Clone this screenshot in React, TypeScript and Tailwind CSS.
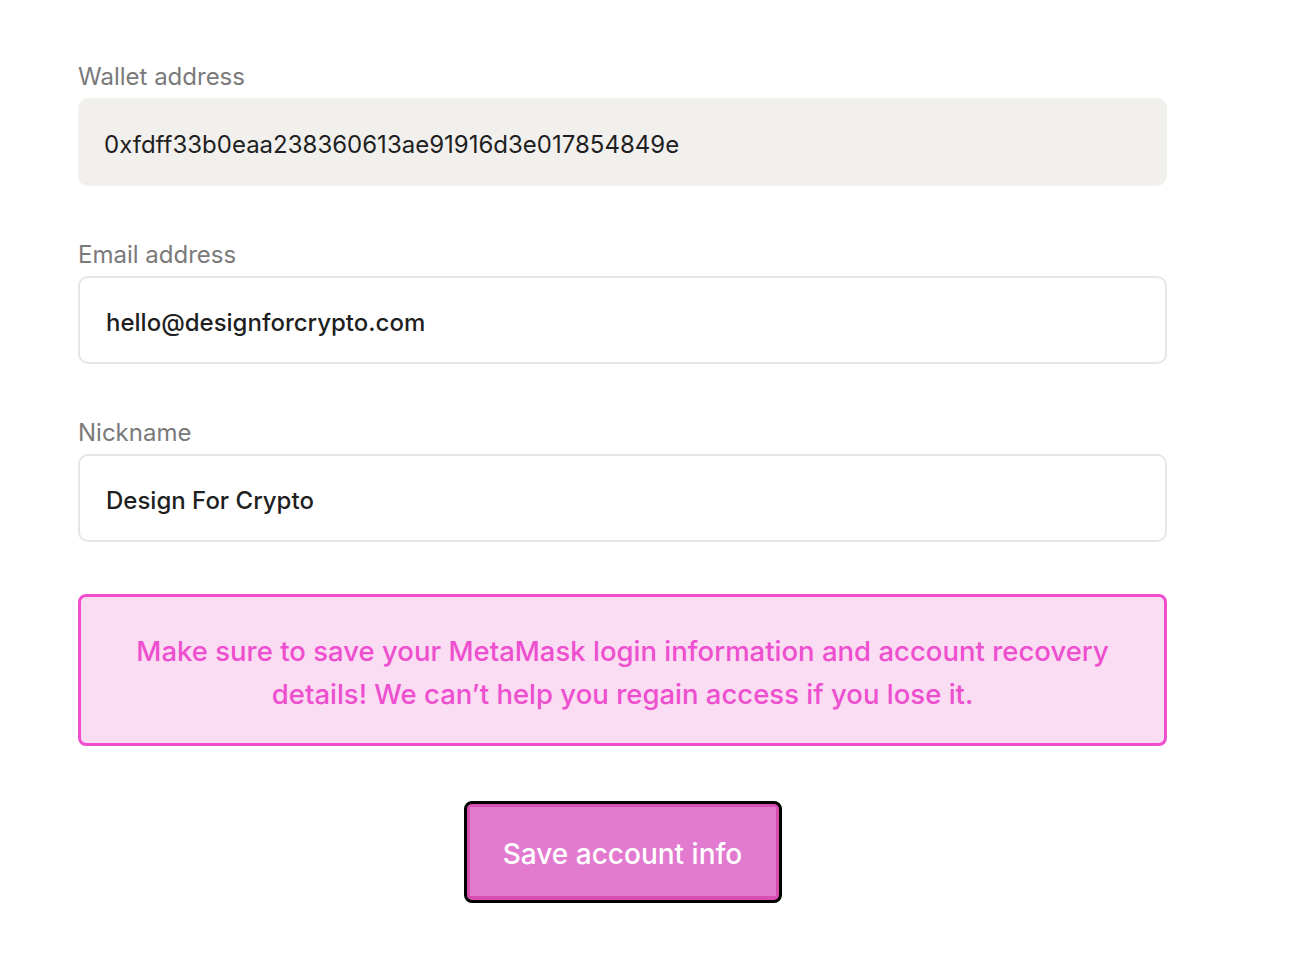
import React from "react";

const font = { fontFamily: "Inter, 'Noto Sans', sans-serif" };

function Field({ label, value, filled, bold }: { label: string; value: string; filled?: boolean; bold?: boolean }) {
  return (
    <div className="flex flex-col">
      <div className="text-[24px] leading-[30px] text-[#7a7a7a] mb-[6px]">{label}</div>
      <div
        className={
          "h-[88px] rounded-[10px] flex items-center px-[26px] pt-[5px] text-[24px] text-[#1f1f1f] " +
          (filled ? "bg-[#f1f0ed]" : "bg-white border-2 border-[#e6e6e6]") +
          (bold ? " font-medium" : "")
        }
      >
        {value}
      </div>
    </div>
  );
}

export default function App() {
  return (
    <div className="min-h-[960px] bg-white" style={font}>
      <div className="w-[1089px] ml-[78px] pt-[62px] flex flex-col gap-[54px]">
        <Field label="Wallet address" value="0xfdff33b0eaa238360613ae91916d3e017854849e" filled />
        <Field label="Email address" value="hello@designforcrypto.com" bold />
        <Field label="Nickname" value="Design For Crypto" bold />
      </div>
      <div className="w-[1089px] ml-[78px] mt-[52px] h-[152px] rounded-[8px] border-[3px] border-[#ef4fcf] bg-[#fadcf3] flex items-center justify-center px-[30px] pt-[6px]">
        <p className="text-center text-[27.5px] leading-[43px] text-[#ee4fcf] font-medium">
          Make sure to save your MetaMask login information and account recovery details! We can’t help you regain access if you lose it.
        </p>
      </div>
      <div className="w-[1089px] ml-[78px] mt-[55px] flex justify-center">
        <button className="w-[318px] h-[102px] rounded-[8px] border-[3px] border-black bg-[#d94fb0] p-[3px] pb-[4px]">
          <div className="w-full h-full bg-[#e27ad0] flex items-center justify-center pt-[5px] text-white text-[28px] font-medium">
            Save account info
          </div>
        </button>
      </div>
    </div>
  );
}
